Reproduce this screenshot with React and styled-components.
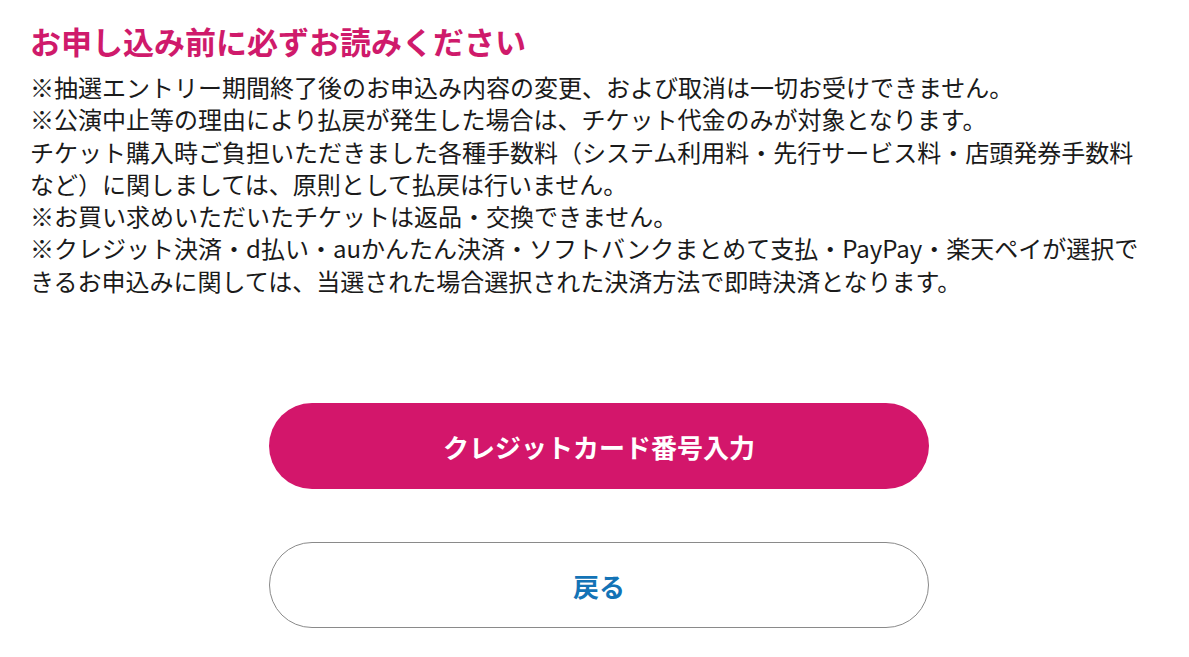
import React from "react";
import styled, { createGlobalStyle } from "styled-components";

const GlobalStyle = createGlobalStyle`
  html, body {
    margin: 0;
    padding: 0;
    background: #fff;
  }
  body {
    font-family: "Noto Sans CJK JP", "Noto Sans", sans-serif;
    color: #1a1a1a;
  }
`;

const Page = styled.div`
  padding: 18px 21px 0 30px;
`;

const Title = styled.h2`
  margin: 0 0 7px;
  font-size: 31px;
  line-height: 46px;
  font-weight: 700;
  color: #cf1a6b;
`;

const Notes = styled.div`
  max-width: 1122px;
  font-size: 24px;
  line-height: 32.3px;
`;

const Line = styled.p`
  margin: 0;
`;

const Actions = styled.div`
  display: flex;
  flex-direction: column;
  align-items: center;
  gap: 53px;
  margin-top: 106px;
`;

const Button = styled.button`
  width: 660px;
  height: 86px;
  border-radius: 43px;
  font-family: inherit;
  font-size: 26px;
  font-weight: 700;
  cursor: pointer;
  border: ${(p) => (p.$primary ? "none" : "1px solid #8a8a8a")};
  background: ${(p) => (p.$primary ? "#d3166b" : "#fff")};
  color: ${(p) => (p.$primary ? "#fff" : "#1373b6")};
`;

export default function App() {
  return (
    <Page>
      <GlobalStyle />
      <Title>お申し込み前に必ずお読みください</Title>
      <Notes>
        <Line>※抽選エントリー期間終了後のお申込み内容の変更、および取消は一切お受けできません。</Line>
        <Line>※公演中止等の理由により払戻が発生した場合は、チケット代金のみが対象となります。</Line>
        <Line>チケット購入時ご負担いただきました各種手数料（システム利用料・先行サービス料・店頭発券手数料など）に関しましては、原則として払戻は行いません。</Line>
        <Line>※お買い求めいただいたチケットは返品・交換できません。</Line>
        <Line>※クレジット決済・d払い・auかんたん決済・ソフトバンクまとめて支払・PayPay・楽天ペイが選択できるお申込みに関しては、当選された場合選択された決済方法で即時決済となります。</Line>
      </Notes>
      <Actions>
        <Button $primary>クレジットカード番号入力</Button>
        <Button>戻る</Button>
      </Actions>
    </Page>
  );
}
